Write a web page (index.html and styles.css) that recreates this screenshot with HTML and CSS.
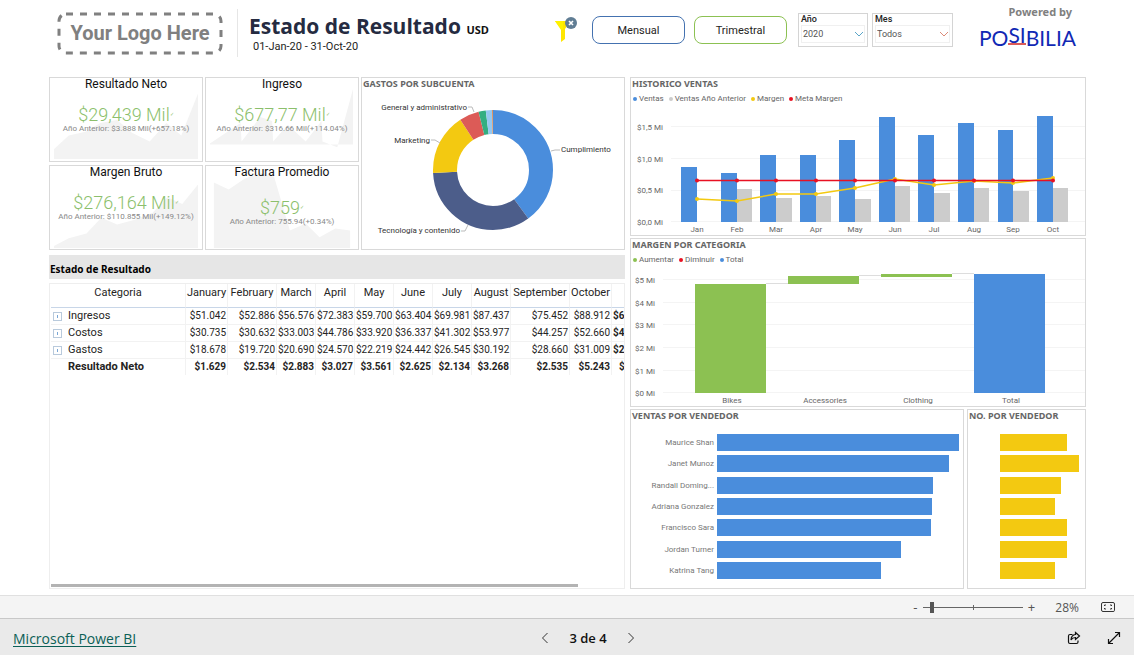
FILE: index.html
```html
<!DOCTYPE html>
<html lang="es">
<head>
<meta charset="utf-8">
<meta name="viewport" content="width=device-width, initial-scale=1">
<title>Estado de Resultado</title>
<link rel="stylesheet" href="styles.css">
</head>
<body>
<div class="report">
  <header class="header">
    <svg class="logo" viewBox="0 0 166 43" width="166" height="43" role="img" aria-label="Your Logo Here">
      <rect class="logo-frame" x="2" y="2" width="162" height="39" rx="7"/>
      <text class="logo-text" x="83" y="28" text-anchor="middle">Your Logo Here</text>
    </svg>
    <div class="heading">
      <h1 class="heading-title">Estado de Resultado <span class="heading-unit">USD</span></h1>
      <p class="heading-dates">01-Jan-20 - 31-Oct-20</p>
    </div>
    <button class="filter" type="button" aria-label="Quitar filtros">
      <svg viewBox="0 0 24 28" width="24" height="28">
        <path d="M1 5H16L11 13V23L7 26V13Z" fill="#ffe600"/>
        <path d="M1 5H9V13L7 14Z" fill="#fff200"/>
        <circle cx="17" cy="7" r="6" fill="#607d94"/>
        <path d="M15 5L19 9M19 5L15 9" stroke="#fff" stroke-width="1.6"/>
      </svg>
    </button>
    <div class="periods">
      <button class="period period--blue" type="button">Mensual</button>
      <button class="period period--green" type="button">Trimestral</button>
    </div>
    <div class="slicers">
      <div class="slicer">
        <label class="slicer-label" for="year">Año</label>
        <div class="slicer-box">
          <select class="slicer-select" id="year"><option>2020</option></select>
          <svg class="chevron chevron--blue" viewBox="0 0 10 6" width="10" height="6"><path d="M1 1L5 5L9 1"/></svg>
        </div>
      </div>
      <div class="slicer slicer--wide">
        <label class="slicer-label" for="month">Mes</label>
        <div class="slicer-box">
          <select class="slicer-select" id="month"><option>Todos</option></select>
          <svg class="chevron chevron--red" viewBox="0 0 10 6" width="10" height="6"><path d="M1 1L5 5L9 1"/></svg>
        </div>
      </div>
    </div>
    <div class="brand">
      <p class="brand-by">Powered by</p>
      <p class="brand-name">PO<span class="brand-raised">SI</span>BILIA</p>
    </div>
  </header>

  <main class="board">
    <div class="left">
      <div class="summary">
        <section class="panel kpi">
          <svg class="kpi-area" viewBox="0 0 154 85" preserveAspectRatio="none"><path d="M4 83V73L19 59L36 55L51 46L68 43L83 56L101 65L118 46L133 59L150 16V83Z"/></svg>
          <h2 class="kpi-title">Resultado Neto</h2>
          <p class="kpi-value">$29,439 Mil<span class="kpi-mark">✓</span></p>
          <p class="kpi-note">Año Anterior: $3.888 Mil(+657.18%)</p>
        </section>
        <section class="panel kpi">
          <svg class="kpi-area" viewBox="0 0 154 85" preserveAspectRatio="none"><path d="M4 75V67L35 46L36 65L55 40L67 44L68 65L83 48L101 65L117 44L118 65L133 71L149 11V68H4Z"/></svg>
          <h2 class="kpi-title">Ingreso</h2>
          <p class="kpi-value">$677,77 Mil<span class="kpi-mark">✓</span></p>
          <p class="kpi-note">Año Anterior: $316.66 Mil(+114.04%)</p>
        </section>
        <section class="panel kpi">
          <svg class="kpi-area" viewBox="0 0 154 85" preserveAspectRatio="none"><path d="M4 84V82L19 74L37 69L52 53L68 60L86 55L104 48L119 32L134 39L150 19V84Z"/></svg>
          <h2 class="kpi-title">Margen Bruto</h2>
          <p class="kpi-value">$276,164 Mil<span class="kpi-mark">✓</span></p>
          <p class="kpi-note">Año Anterior: $110.855 Mil(+149.12%)</p>
        </section>
        <section class="panel kpi kpi--low">
          <svg class="kpi-area" viewBox="0 0 154 85" preserveAspectRatio="none"><path d="M8 84V17L23 24L39 13L55 7L69 11L85 66L101 59L115 73L131 64L146 66V84Z"/></svg>
          <h2 class="kpi-title">Factura Promedio</h2>
          <p class="kpi-value">$759<span class="kpi-mark">✓</span></p>
          <p class="kpi-note">Año Anterior: 755.94(+0.34%)</p>
        </section>
        <section class="panel donut">
          <h2 class="panel-title">GASTOS POR SUBCUENTA</h2>
          <svg class="chart" viewBox="0 -1 262 158">
            <g class="ring" transform="rotate(-90 131 79)">
              <circle cx="131" cy="79" r="48" pathLength="360" stroke="#4a8ddc" stroke-dasharray="144 216"/>
              <circle cx="131" cy="79" r="48" pathLength="360" stroke="#4c5d8a" stroke-dasharray="123 237" stroke-dashoffset="-144"/>
              <circle cx="131" cy="79" r="48" pathLength="360" stroke="#f3c911" stroke-dasharray="60 300" stroke-dashoffset="-267"/>
              <circle cx="131" cy="79" r="48" pathLength="360" stroke="#dc5b57" stroke-dasharray="19 341" stroke-dashoffset="-327"/>
              <circle cx="131" cy="79" r="48" pathLength="360" stroke="#33ae81" stroke-dasharray="7 353" stroke-dashoffset="-346"/>
              <circle cx="131" cy="79" r="48" pathLength="360" stroke="#95c8f0" stroke-dasharray="6 354" stroke-dashoffset="-353"/>
              <circle cx="131" cy="79" r="48" pathLength="360" stroke="#dd915f" stroke-dasharray="1 359" stroke-dashoffset="-359"/>
            </g>
            <path class="leader" d="M106 16H110L112 21M69 49H73L78 52M198 59H193L189 60M99 140H103L106 134"/>
            <g class="label label--dark">
              <text x="105" y="19" text-anchor="end">General y administrativo</text>
              <text x="68" y="52" text-anchor="end">Marketing</text>
              <text x="199" y="61">Cumplimiento</text>
              <text x="98" y="142" text-anchor="end">Tecnología y contenido</text>
            </g>
          </svg>
        </section>
      </div>

      <h2 class="section-title">Estado de Resultado</h2>

      <section class="statement">
        <div class="statement-view">
          <table class="table">
            <colgroup><col class="c-cat"><col class="c-jan"><col class="c-feb"><col><col><col><col><col><col><col class="c-sep"><col class="c-oct"><col class="c-total"></colgroup>
            <thead>
              <tr><th>Categoria</th><th>January</th><th>February</th><th>March</th><th>April</th><th>May</th><th>June</th><th>July</th><th>August</th><th>September</th><th>October</th><th></th></tr>
            </thead>
            <tbody>
              <tr><th><button class="expand" type="button" aria-label="Expandir Ingresos"></button>Ingresos</th><td>$51.042</td><td>$52.886</td><td>$56.576</td><td>$72.383</td><td>$59.700</td><td>$63.404</td><td>$69.981</td><td>$87.437</td><td>$75.452</td><td>$88.912</td><td>$677.773</td></tr>
              <tr><th><button class="expand" type="button" aria-label="Expandir Costos"></button>Costos</th><td>$30.735</td><td>$30.632</td><td>$33.003</td><td>$44.786</td><td>$33.920</td><td>$36.337</td><td>$41.302</td><td>$53.977</td><td>$44.257</td><td>$52.660</td><td>$401.609</td></tr>
              <tr><th><button class="expand" type="button" aria-label="Expandir Gastos"></button>Gastos</th><td>$18.678</td><td>$19.720</td><td>$20.690</td><td>$24.570</td><td>$22.219</td><td>$24.442</td><td>$26.545</td><td>$30.192</td><td>$28.660</td><td>$31.009</td><td>$246.725</td></tr>
            </tbody>
            <tfoot>
              <tr><th>Resultado Neto</th><td>$1.629</td><td>$2.534</td><td>$2.883</td><td>$3.027</td><td>$3.561</td><td>$2.625</td><td>$2.134</td><td>$3.268</td><td>$2.535</td><td>$5.243</td><td>$29.439</td></tr>
            </tfoot>
          </table>
        </div>
        <div class="scroll-thumb"></div>
      </section>
    </div>

    <div class="right">
      <section class="panel">
        <h2 class="panel-title">HISTORICO VENTAS</h2>
        <ul class="legend">
          <li class="key key--blue">Ventas</li><li class="key key--gray">Ventas Año Anterior</li><li class="key key--yellow">Margen</li><li class="key key--red">Meta Margen</li>
        </ul>
        <svg class="chart" viewBox="0 0 454 131">
          <path class="gridline" d="M40 22.5H454M40 54.5H454M40 86.5H454M40 117.5H454"/>
          <g class="label" text-anchor="end">
            <text x="32" y="26">$1,5 Mi</text><text x="32" y="58">$1,0 Mi</text><text x="32" y="89">$0,5 Mi</text><text x="32" y="121">$0,0 Mi</text>
          </g>
          <g fill="#4a8ddc">
            <rect x="50" y="63" width="16" height="55"/><rect x="90" y="69" width="16" height="49"/><rect x="129" y="51" width="16" height="67"/><rect x="169" y="51" width="16" height="67"/><rect x="208" y="36" width="16" height="82"/><rect x="248" y="13" width="16" height="105"/><rect x="287" y="31" width="16" height="87"/><rect x="327" y="19" width="16" height="99"/><rect x="367" y="26" width="15" height="92"/><rect x="406" y="12" width="16" height="106"/>
          </g>
          <g fill="#ccc">
            <rect x="106" y="85" width="15" height="33"/><rect x="145" y="94" width="16" height="24"/><rect x="185" y="92" width="15" height="26"/><rect x="224" y="95" width="16" height="23"/><rect x="264" y="82" width="15" height="36"/><rect x="303" y="89" width="16" height="29"/><rect x="343" y="84" width="15" height="34"/><rect x="382" y="87" width="16" height="31"/><rect x="422" y="84" width="15" height="34"/>
          </g>
          <g class="series series--margin">
            <path d="M66 95L106 97L145 90L185 90L224 84L264 75L303 81L343 77L382 79L422 74"/>
            <path class="dots" d="M66 95h0M106 97h0M145 90h0M185 90h0M224 84h0M264 75h0M303 81h0M343 77h0M382 79h0M422 74h0"/>
          </g>
          <g class="series series--goal">
            <path d="M66 76.5H422"/>
            <path class="dots" d="M66 76.5h0M106 76.5h0M145 76.5h0M185 76.5h0M224 76.5h0M264 76.5h0M303 76.5h0M343 76.5h0M382 76.5h0M422 76.5h0"/>
          </g>
          <g class="label" text-anchor="middle">
            <text x="66" y="128">Jan</text><text x="106" y="128">Feb</text><text x="145" y="128">Mar</text><text x="185" y="128">Apr</text><text x="224" y="128">May</text><text x="264" y="128">Jun</text><text x="303" y="128">Jul</text><text x="343" y="128">Aug</text><text x="382" y="128">Sep</text><text x="422" y="128">Oct</text>
          </g>
        </svg>
      </section>

      <section class="panel">
        <h2 class="panel-title">MARGEN POR CATEGORIA</h2>
        <ul class="legend">
          <li class="key key--green">Aumentar</li><li class="key key--red">Diminuir</li><li class="key key--blue">Total</li>
        </ul>
        <svg class="chart" viewBox="0 0 454 141">
          <path class="gridline" d="M32 14.5H454M32 37.5H454M32 59.5H454M32 82.5H454M32 105.5H454M32 127.5H454"/>
          <path class="connector" d="M135 18.5H157M228 10.5H250M321 8.5H343"/>
          <g class="label">
            <text x="4" y="18">$5 Mi</text><text x="4" y="41">$4 Mi</text><text x="4" y="63">$3 Mi</text><text x="4" y="86">$2 Mi</text><text x="4" y="109">$1 Mi</text><text x="4" y="131">$0 Mi</text>
          </g>
          <g fill="#8cc152">
            <rect x="64" y="19" width="71" height="109"/><rect x="157" y="11" width="71" height="8"/><rect x="250" y="9" width="71" height="3"/>
          </g>
          <rect x="343" y="9" width="71" height="119" fill="#4a8ddc"/>
          <g class="label" text-anchor="middle">
            <text x="101" y="138">Bikes</text><text x="194" y="138">Accessories</text><text x="287" y="138">Clothing</text><text x="380" y="138">Total</text>
          </g>
        </svg>
      </section>

      <div class="sellers">
        <section class="panel">
          <h2 class="panel-title">VENTAS POR VENDEDOR</h2>
          <ul class="bars bars--sales">
            <li class="bar-row"><span class="bar-name">Maurice Shan</span><span class="bar-track"><span class="bar" style="width:100%"></span></span></li>
            <li class="bar-row"><span class="bar-name">Janet Munoz</span><span class="bar-track"><span class="bar" style="width:96%"></span></span></li>
            <li class="bar-row"><span class="bar-name">Randall Doming...</span><span class="bar-track"><span class="bar" style="width:89.3%"></span></span></li>
            <li class="bar-row"><span class="bar-name">Adriana Gonzalez</span><span class="bar-track"><span class="bar" style="width:89%"></span></span></li>
            <li class="bar-row"><span class="bar-name">Francisco Sara</span><span class="bar-track"><span class="bar" style="width:88.3%"></span></span></li>
            <li class="bar-row"><span class="bar-name">Jordan Turner</span><span class="bar-track"><span class="bar" style="width:76%"></span></span></li>
            <li class="bar-row"><span class="bar-name">Katrina Tang</span><span class="bar-track"><span class="bar" style="width:67.7%"></span></span></li>
          </ul>
        </section>
        <section class="panel">
          <h2 class="panel-title">NO. POR VENDEDOR</h2>
          <ul class="bars bars--count">
            <li class="bar-row"><span class="bar" style="width:85%"></span></li>
            <li class="bar-row"><span class="bar" style="width:100%"></span></li>
            <li class="bar-row"><span class="bar" style="width:77%"></span></li>
            <li class="bar-row"><span class="bar" style="width:69.5%"></span></li>
            <li class="bar-row"><span class="bar" style="width:85%"></span></li>
            <li class="bar-row"><span class="bar" style="width:85%"></span></li>
            <li class="bar-row"><span class="bar" style="width:69.5%"></span></li>
          </ul>
        </section>
      </div>
    </div>
  </main>
</div>

<div class="zoombar">
  <div class="zoom">
    <button class="zoom-step" type="button" aria-label="Alejar">-</button>
    <input class="zoom-range" type="range" min="0" max="100" value="7" aria-label="Zoom">
    <button class="zoom-step" type="button" aria-label="Acercar">+</button>
  </div>
  <span class="zoom-value">28%</span>
  <button class="icon-button" type="button" aria-label="Ajustar a la página">
    <svg viewBox="0 0 14 12" width="14" height="12"><path d="M2 1.5H12Q13.500 1.500 13.500 3V9.500Q13.500 10.500 12 10.500H2Q.5 10.500 .5 9V3Q.5 1.500 2 1.500ZM3.500 5V4H5M9 4H10.500V5M10.500 7V8H9M5 8H3.500V7"/></svg>
  </button>
</div>

<footer class="footer">
  <a class="footer-link" href="#">Microsoft Power BI</a>
  <nav class="pager" aria-label="Páginas">
    <button class="icon-button" type="button" aria-label="Anterior"><svg viewBox="0 0 8 12" width="8" height="12"><path d="M6.500 1L1.500 6L6.500 11"/></svg></button>
    <span class="pager-text">3 de 4</span>
    <button class="icon-button" type="button" aria-label="Siguiente"><svg viewBox="0 0 8 12" width="8" height="12"><path d="M1.500 1L6.500 6L1.500 11"/></svg></button>
  </nav>
  <div class="footer-actions">
    <button class="icon-button icon-button--dark" type="button" aria-label="Compartir">
      <svg viewBox="0 0 14 14" width="14" height="14"><path d="M5.500 3.500H3Q1.500 3.500 1.500 5V11Q1.500 12.500 3 12.500H9.500Q11 12.500 11 11V9.500M8.500 1.500L12.500 5L8.500 8.500V6.500Q5.500 6.500 4 9Q4.200 4 8.500 3.500Z"/></svg>
    </button>
    <button class="icon-button icon-button--dark" type="button" aria-label="Pantalla completa">
      <svg viewBox="0 0 14 14" width="14" height="14"><path d="M1.500 12.500L12.500 1.500M8 1.500H12.500V6M1.500 8V12.500H6"/></svg>
    </button>
  </div>
</footer>
</body>
</html>
```
FILE: styles.css
```css
* { box-sizing: border-box; }

body {
  margin: 0;
  min-height: 100vh;
  display: flex;
  flex-direction: column;
  background: #fff;
  color: #252423;
  font-family: Roboto, "Liberation Sans", sans-serif;
}

h1, h2, p, ul { margin: 0; padding: 0; }
ul { list-style: none; }
button, select { font: inherit; color: inherit; }
button { padding: 0; border: 0; background: none; cursor: pointer; }

.report {
  flex: 1;
  display: flex;
  flex-direction: column;
  padding: 0 48px 6px 49px;
}

/* Header */
.header {
  height: 77px;
  display: flex;
  align-items: flex-start;
  padding: 0 10px 0 8px;
}
.logo { margin-top: 12px; flex: none; }
.logo-frame { fill: none; stroke: #808080; stroke-width: 3; stroke-dasharray: 7 7; }
.logo-text { fill: #808080; font: bold 20px Roboto, sans-serif; }
.heading {
  margin: 9px 0 0 14px;
  height: 48px;
  padding: 5px 0 0 11px;
  border-left: 1px solid #e6e6e6;
  white-space: nowrap;
}
.heading-title {
  color: #252b41;
  font: bold 21px/24px "Open Sans", sans-serif;
}
.heading-unit { color: #111; font-size: 11px; }
.heading-dates { padding-left: 4px; font-size: 11px; line-height: 10px; }
.filter { margin: 16px 0 0 auto; height: 28px; }
.periods { display: flex; gap: 9px; margin: 16px 0 0 14px; }
.period {
  width: 93px;
  height: 28px;
  border: 1px solid #4472b0;
  border-radius: 8px;
  font-size: 11px;
}
.period--green { border-color: #8cc152; }
.slicers { display: flex; gap: 4px; margin: 13px 0 0 11px; }
.slicer {
  width: 70px;
  height: 34px;
  padding: 0 2px;
  border: 1px solid #d4d4d4;
}
.slicer--wide { width: 81px; }
.slicer-label { display: block; font-size: 9px; font-weight: 500; line-height: 11px; }
.slicer-box { position: relative; border: 1px solid #f0f0f0; }
.slicer-select {
  display: block;
  width: 100%;
  height: 16px;
  padding: 0 1px;
  border: 0;
  background: none;
  appearance: none;
  color: #555;
  font-size: 9px;
}
.chevron { position: absolute; right: 0; top: 5px; fill: none; stroke-width: 1; pointer-events: none; }
.chevron--blue { stroke: #5aa5c8; }
.chevron--red { stroke: #dc8a78; }
.brand { margin: 4px 0 0 26px; }
.brand-by { padding-right: 4px; text-align: right; color: #808080; font: bold 11px/16px "Noto Sans", sans-serif; }
.brand-name { color: #1128b4; font: 21px/24px Lato, sans-serif; padding-top: 6px; }
.brand-raised {
  display: inline-block;
  vertical-align: 3px;
  line-height: 17px;
  border-bottom: 2px solid #dc5b57;
}

/* Board */
.board {
  flex: 1;
  display: grid;
  grid-template-columns: 576fr 456fr;
  gap: 5px;
}
.left, .right { display: flex; flex-direction: column; min-width: 0; }
.right { gap: 2px; }
.panel { border: 1px solid #d9d9d9; display: flex; flex-direction: column; min-width: 0; }
.panel-title {
  padding-left: 1px;
  color: #666;
  font: bold 9px/12px "Noto Sans", sans-serif;
}
.chart { display: block; width: 100%; height: auto; }
.label { fill: #666; font-size: 8px; }
.label--dark { fill: #333; }
.gridline { stroke: #f4f4f4; fill: none; }
.connector { stroke: #ddd; }

.summary {
  display: grid;
  grid-template-columns: 154fr 154fr 264fr;
  grid-auto-rows: 85px;
  gap: 3px 2px;
}
.donut { grid-column: 3; grid-row: 1 / span 2; }
.ring circle { fill: none; stroke-width: 24; }
.leader { fill: none; stroke: #bbb; }

.kpi { position: relative; text-align: center; white-space: nowrap; }
.kpi-area { position: absolute; inset: 0; width: 100%; height: 100%; z-index: -1; fill: #f3f3f3; }
.kpi-title { font-size: 12px; font-weight: 400; line-height: 13px; color: #111; }
.kpi-value { padding-top: 12px; color: #8cbf6c; font-size: 18px; font-weight: 300; line-height: 22px; }
.kpi-mark { font-size: 5px; vertical-align: 5px; }
.kpi-note { color: #888; font-size: 8px; line-height: 5px; }
.kpi--low .kpi-value { padding-top: 17px; }

/* Statement */
.section-title {
  margin: 5px 0 4px;
  height: 24px;
  padding: 4px 1px 0;
  background: #e6e6e6;
  color: #000;
  font: bold 10px/20px "Noto Sans", sans-serif;
}
.statement { flex: 1; display: flex; flex-direction: column; border: 1px solid #eee; padding: 0 0 1px 1px; }
.statement-view { flex: 1; overflow: hidden; }
.table { table-layout: fixed; border-collapse: separate; border-spacing: 0; width: 100%; font-size: 10px; }
.table col { width: 39px; }
.table .c-cat { width: 135px; }
.table .c-jan { width: 42px; }
.table .c-feb { width: 49px; }
.table .c-sep { width: 59px; }
.table .c-oct { width: 42px; }
.table .c-total { width: auto; }
.table th, .table td { padding: 0 1px; line-height: 16px; text-align: right; white-space: nowrap; border-right: 1px solid #f2f2f2; }
.table tbody th, .table tbody td { border-bottom: 1px solid #f2f2f2; }
.table thead th { height: 24px; padding: 0 0 5px; text-align: center; border-bottom: 1px solid #c8d6e8; font-size: 11px; font-weight: 400; }
.table tbody th { padding-left: 2px; text-align: left; font-size: 11px; font-weight: 400; }
.table tfoot th, .table tfoot td, .table td:last-child { font-weight: 700; }
.table tfoot th { padding-left: 17px; text-align: left; font-size: 11px; }
.table th:last-child, .table td:last-child { border-right: 0; overflow: hidden; }
.table tfoot td:last-child { padding-left: 7px; }
.expand {
  width: 9px;
  height: 9px;
  margin-right: 6px;
  border: 1px solid #b9cadc;
  vertical-align: -1px;
  background: linear-gradient(#7aa7d6, #7aa7d6) center / 1px 3px no-repeat;
}
.scroll-thumb { width: 92%; height: 3px; background: #b3b3b3; }

/* Right column charts */
.legend { display: flex; gap: 5px; padding: 3px 0 0 2px; color: #666; font-size: 8px; line-height: 11px; }
.key { display: flex; align-items: center; gap: 2px; }
.key::before { content: ""; width: 4px; height: 4px; border-radius: 50%; background: currentColor; }
.key--blue::before { background: #4a8ddc; }
.key--gray::before { background: #ccc; }
.key--yellow::before { background: #f3c911; }
.key--red::before { background: #e81123; }
.key--green::before { background: #8cc152; }
.series { fill: none; stroke-width: 1.5; }
.series--margin { stroke: #f3c911; }
.series--goal { stroke: #e81123; }
.dots { stroke-width: 4; stroke-linecap: round; }

.sellers { flex: 1; display: grid; grid-template-columns: 334fr 119fr; gap: 3px; }
.bars { flex: 1; display: flex; flex-direction: column; justify-content: space-between; }
.bars--sales { padding: 12px 4px 9px 0; }
.bars--count { padding: 12px 6px 9px 32px; }
.bar-row { display: flex; align-items: center; gap: 3px; }
.bar-name { width: 83px; text-align: right; color: #777; font-size: 8px; white-space: nowrap; }
.bar-track { flex: 1; }
.bar { display: block; height: 17px; background: #4a8ddc; }
.bars--count .bar { background: #f3c911; }

/* Zoom bar and footer */
.zoombar {
  height: 23px;
  display: flex;
  align-items: center;
  justify-content: flex-end;
  padding-right: 19px;
  border-top: 1px solid #e0e0e0;
  background: #f4f4f4;
  color: #555;
  font: 12px "Noto Sans", sans-serif;
}
.zoom { display: flex; align-items: center; gap: 3px; }
.zoom-step { width: 10px; font-size: 13px; line-height: 16px; }
.zoom-range {
  width: 100px;
  height: 12px;
  margin: 0;
  appearance: none;
  background:
    linear-gradient(#666, #666) center / 100% 1px no-repeat,
    linear-gradient(#666, #666) center / 1px 5px no-repeat;
}
.zoom-range::-webkit-slider-thumb { appearance: none; width: 4px; height: 11px; background: #555; }
.zoom-value { margin: 0 22px 0 19px; font: 12px "Open Sans", sans-serif; }
.icon-button { display: flex; }
.icon-button svg { fill: none; stroke: #333; stroke-width: 1; }
.icon-button--dark svg { stroke: #111; stroke-width: 1.2; }

.footer {
  height: 37px;
  display: grid;
  grid-template-columns: 1fr auto 1fr;
  align-items: center;
  padding: 2px 13px 0;
  border-top: 1px solid #c8c8c8;
  background: #eaeaea;
  font: 14px "Open Sans", sans-serif;
}
.footer-link { justify-self: start; color: #0b5f56; text-underline-offset: 2px; }
.pager { display: flex; align-items: center; gap: 20px; padding-left: 42px; }
.pager-text { color: #111; font-size: 13px; font-weight: 600; }
.footer-actions { justify-self: end; display: flex; gap: 26px; }
```
